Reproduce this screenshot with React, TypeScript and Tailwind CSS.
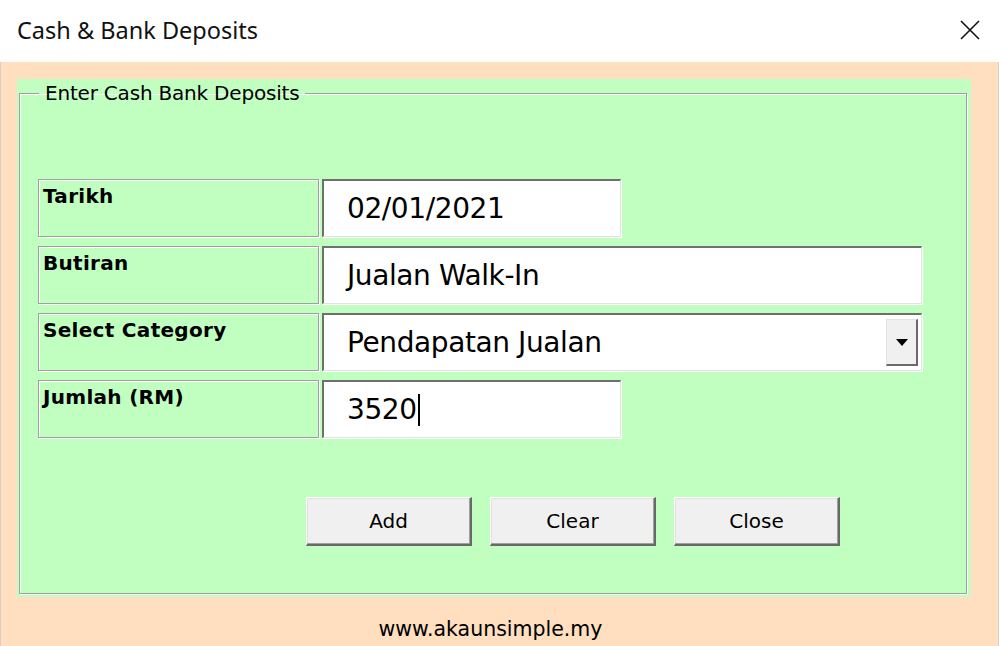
import React from 'react';

const tahoma = { fontFamily: '"DejaVu Sans", Verdana, sans-serif' };

function Label({ text }: { text: string }) {
  return (
    <div className="w-[281px] h-[58px] border border-[#a0a0a0] shadow-[1px_1px_0_#ffffff,inset_1px_1px_0_#ffffff] bg-[#c0ffc0] px-[4px] pt-[4px] leading-[24px]">
      <span className="text-[20px] font-bold text-black tracking-[0.3px]" style={tahoma}>
        {text}
      </span>
    </div>
  );
}

function Field({ value, width, cursor }: { value: string; width: string; cursor?: boolean }) {
  return (
    <div
      className={`${width} h-[58px] bg-white border-t-2 border-l-2 border-t-[#6f6f6f] border-l-[#6f6f6f] border-b border-r border-b-[#e3e3e3] border-r-[#e3e3e3] shadow-[1px_1px_0_#ffffff] flex items-center pl-[23px]`}
    >
      <span className="text-[28px] text-black tracking-[-0.4px]" style={tahoma}>
        {value}
      </span>
      {cursor && <span className="ml-[1px] h-[32px] border-l-2 border-black" />}
    </div>
  );
}

function Btn({ text }: { text: string }) {
  return (
    <button className="w-[166px] h-[49px] bg-[#f0f0f0] border-t border-l border-t-white border-l-white border-b-2 border-r-2 border-b-[#696969] border-r-[#696969] shadow-[inset_-1px_-1px_0_#a0a0a0,inset_1px_1px_0_#e3e3e3] text-[20px] text-black" style={tahoma}>
      {text}
    </button>
  );
}

export default function App() {
  return (
    <div className="w-[999px] h-[646px] flex flex-col bg-white overflow-hidden">
      <div className="h-[62px] flex items-center justify-between pl-[17px] pr-[18px] bg-white">
        <span className="text-[23.5px] text-[#111111] leading-none" style={{ fontFamily: '"Noto Sans", "Open Sans", sans-serif' }}>
          Cash &amp; Bank Deposits
        </span>
        <svg width="22" height="22" viewBox="0 0 22 22" className="mb-[2px]">
          <path d="M2 2 L20 20 M20 2 L2 20" stroke="#111111" strokeWidth="1.6" fill="none" />
        </svg>
      </div>

      <div className="flex-1 bg-[#ffdfc0] border-l border-r border-[#d8d0c8] pl-[16px] pt-[17px] flex flex-col">
        <div className="w-[954px] h-[518px] bg-[#c0ffc0] pl-[2px] pr-[4px] pt-[2px]">
          <fieldset className="h-[513px] border border-[#a0a0a0] shadow-[1px_1px_0_#ffffff,inset_1px_1px_0_#ffffff] pl-[18px] pt-[74px]">
            <legend className="ml-[1px] px-[6px] text-[20px] text-black leading-[24px] tracking-[-0.2px]" style={tahoma}>
              Enter Cash Bank Deposits
            </legend>

            <div className="flex flex-col gap-[9px]">
              <div className="flex gap-[3px]">
                <Label text="Tarikh" />
                <Field value="02/01/2021" width="w-[299px]" />
              </div>
              <div className="flex gap-[3px]">
                <Label text="Butiran" />
                <Field value="Jualan Walk-In" width="w-[600px]" />
              </div>
              <div className="flex gap-[3px]">
                <Label text="Select Category" />
                <div className="w-[600px] h-[58px] bg-white border-t-2 border-l-2 border-t-[#6f6f6f] border-l-[#6f6f6f] border-b border-r border-b-[#e3e3e3] border-r-[#e3e3e3] shadow-[1px_1px_0_#ffffff] flex items-center pl-[23px] pr-[3px]">
                  <span className="flex-1 text-[28px] text-black tracking-[-0.4px]" style={tahoma}>
                    Pendapatan Jualan
                  </span>
                  <div className="w-[32px] h-[47px] bg-[#f0f0f0] border-t border-l border-t-[#e3e3e3] border-l-[#e3e3e3] border-b-2 border-r-2 border-b-[#696969] border-r-[#696969] flex items-center justify-center">
                    <svg width="12" height="7" viewBox="0 0 12 7">
                      <path d="M0 0 H12 L6 7 Z" fill="#000000" />
                    </svg>
                  </div>
                </div>
              </div>
              <div className="flex gap-[3px]">
                <Label text="Jumlah (RM)" />
                <Field value="3520" width="w-[299px]" cursor />
              </div>
            </div>

            <div className="flex gap-[18px] ml-[268px] mt-[59px]">
              <Btn text="Add" />
              <Btn text="Clear" />
              <Btn text="Close" />
            </div>
          </fieldset>
        </div>

        <div className="flex-1 flex items-center justify-center pr-[34px] pt-[16px]">
          <span className="text-[20.5px] text-black" style={tahoma}>
            www.akaunsimple.my
          </span>
        </div>
      </div>
    </div>
  );
}
